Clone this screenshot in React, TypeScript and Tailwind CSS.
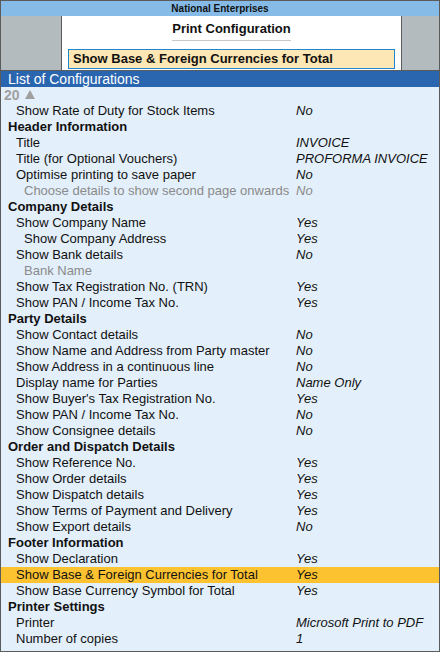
type Row = {
  label: string;
  value?: string;
  level: 1 | 2 | 3;
  muted?: boolean;
  active?: boolean;
};

const rows: Row[] = [
  { label: 'Show Rate of Duty for Stock Items', value: 'No', level: 2 },
  { label: 'Header Information', level: 1 },
  { label: 'Title', value: 'INVOICE', level: 2 },
  { label: 'Title (for Optional Vouchers)', value: 'PROFORMA INVOICE', level: 2 },
  { label: 'Optimise printing to save paper', value: 'No', level: 2 },
  { label: 'Choose details to show second page onwards', value: 'No', level: 3, muted: true },
  { label: 'Company Details', level: 1 },
  { label: 'Show Company Name', value: 'Yes', level: 2 },
  { label: 'Show Company Address', value: 'Yes', level: 3 },
  { label: 'Show Bank details', value: 'No', level: 2 },
  { label: 'Bank Name', level: 3, muted: true },
  { label: 'Show Tax Registration No. (TRN)', value: 'Yes', level: 2 },
  { label: 'Show PAN / Income Tax No.', value: 'Yes', level: 2 },
  { label: 'Party Details', level: 1 },
  { label: 'Show Contact details', value: 'No', level: 2 },
  { label: 'Show Name and Address from Party master', value: 'No', level: 2 },
  { label: 'Show Address in a continuous line', value: 'No', level: 2 },
  { label: 'Display name for Parties', value: 'Name Only', level: 2 },
  { label: "Show Buyer's Tax Registration No.", value: 'Yes', level: 2 },
  { label: 'Show PAN / Income Tax No.', value: 'No', level: 2 },
  { label: 'Show Consignee details', value: 'No', level: 2 },
  { label: 'Order and Dispatch Details', level: 1 },
  { label: 'Show Reference No.', value: 'Yes', level: 2 },
  { label: 'Show Order details', value: 'Yes', level: 2 },
  { label: 'Show Dispatch details', value: 'Yes', level: 2 },
  { label: 'Show Terms of Payment and Delivery', value: 'Yes', level: 2 },
  { label: 'Show Export details', value: 'No', level: 2 },
  { label: 'Footer Information', level: 1 },
  { label: 'Show Declaration', value: 'Yes', level: 2 },
  { label: 'Show Base & Foreign Currencies for Total', value: 'Yes', level: 2, active: true },
  { label: 'Show Base Currency Symbol for Total', value: 'Yes', level: 2 },
  { label: 'Printer Settings', level: 1 },
  { label: 'Printer', value: 'Microsoft Print to PDF', level: 2 },
  { label: 'Number of copies', value: '1', level: 2 },
];

const indent = { 1: 'pl-[7px] font-bold', 2: 'pl-[15px]', 3: 'pl-[23px]' };

export default function App() {
  return (
    <div
      className="w-[440px] h-[652px] border border-[#5b5b5b] flex flex-col bg-[#e3effa] text-[#111] overflow-hidden"
      style={{ fontFamily: '"Liberation Sans", Arial, sans-serif' }}
    >
      {/* title bar */}
      <div className="h-[15px] shrink-0 bg-[#85bbe6] flex items-center justify-center text-[10px] font-bold leading-none">
        National Enterprises
      </div>

      {/* dialog head */}
      <div className="h-[55px] shrink-0 flex border-b border-[#5b5b5b]">
        <div className="w-[61px] bg-[#b4bbbe] border-r border-[#5b5b5b]" />
        <div className="flex-1 bg-white flex flex-col items-center">
          <div className="mt-[5px] text-[13px] font-bold leading-[16px] border-b border-[#c8c8c8] pb-[3px]">
            Print Configuration
          </div>
          <div className="mt-[8px] w-[327px] h-[20px] border border-[#1e86cf] bg-[#fde7b4] text-[13px] font-bold leading-[18px] pl-[4px]">
            Show Base &amp; Foreign Currencies for Total
          </div>
        </div>
        <div className="w-[38px] bg-[#b4bbbe] border-l border-[#5b5b5b]" />
      </div>

      {/* list header */}
      <div className="h-[16px] shrink-0 bg-[#2a66b0] text-white text-[14px] leading-[16px] pl-[7px]">
        List of Configurations
      </div>

      {/* list */}
      <div className="flex flex-col text-[13px] leading-[16px]">
        <div className="h-[16px] pl-[3px] text-[#a0a0a0] font-bold flex items-center gap-[5px] text-[14px]">
          <span>20</span>
          <svg width="10" height="9" viewBox="0 0 10 9" className="mt-[-1px]">
            <path d="M5 0 L10 9 L0 9 Z" fill="#a0a0a0" />
          </svg>
        </div>
        {rows.map((r, i) => (
          <div
            key={i}
            className={`h-[16px] flex whitespace-nowrap ${r.active ? 'bg-[#fdc230]' : ''}`}
          >
            <div className={`w-[295px] shrink-0 ${indent[r.level]} ${r.muted ? 'text-[#8a8a8a]' : ''}`}>
              {r.label}
            </div>
            {r.value && (
              <div className={`italic ${r.muted ? 'text-[#8a8a8a]' : ''}`}>{r.value}</div>
            )}
          </div>
        ))}
      </div>
    </div>
  );
}
